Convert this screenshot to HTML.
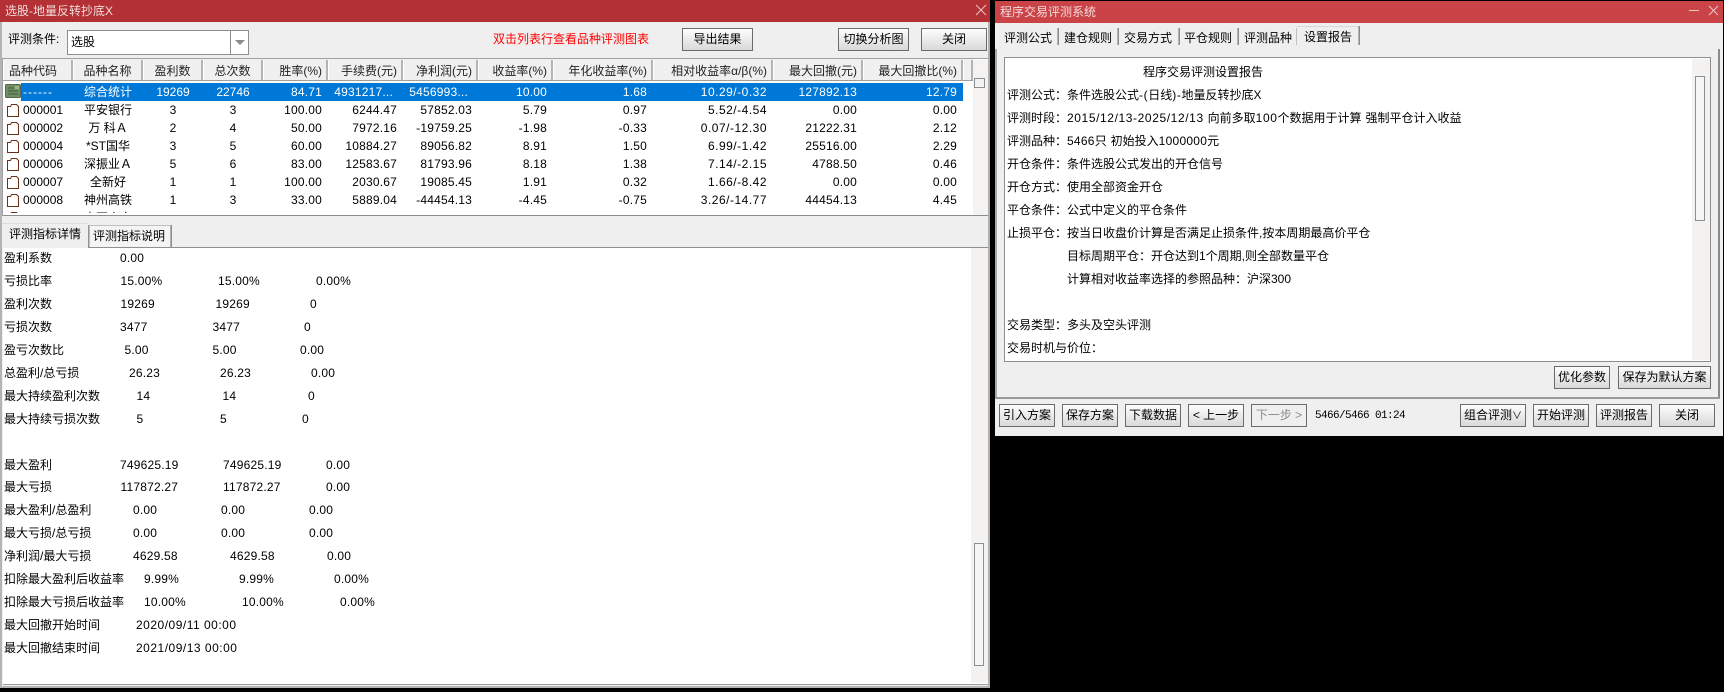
<!DOCTYPE html>
<html lang="zh-CN"><head><meta charset="utf-8"><title>选股-地量反转抄底X</title>
<style>
html,body{margin:0;padding:0;background:#000;width:1724px;height:692px;overflow:hidden}
body{position:relative;font:12px/18px "Liberation Sans","Noto Sans CJK SC",sans-serif;color:#000}
div,span,svg,table{position:absolute}
i{font-style:normal;letter-spacing:.6px}
i.w{letter-spacing:.25px}
.win{background:#efefef}
.tt{color:#f4dcdc;font-size:12px;line-height:22px;white-space:nowrap}
.btn{box-sizing:border-box;border:1px solid #6b6b6b;background:linear-gradient(#fdfdfd,#e9e9e9 55%,#d9d9d9);text-align:center;white-space:nowrap;overflow:hidden}
.hd{top:60px;height:20px;box-sizing:border-box;background:#f0f0f0;border-right:2px solid #b4b4b4;border-left:1px solid #fff;line-height:22px;white-space:nowrap;color:#222}
.c{text-align:center}.r{text-align:right;padding-right:4px}
table{border-collapse:collapse;table-layout:fixed;left:3px;top:0;width:960px}
td{height:18px;padding:0 6px 0 0;text-align:right;white-space:nowrap;overflow:hidden;line-height:18px;letter-spacing:.2px}
td.a{text-align:left;padding:0 0 0 20px;letter-spacing:0}td.m{text-align:center;padding:0;letter-spacing:0}
td.x{letter-spacing:.5px}
tr.s td.a{letter-spacing:1px}
tr.s td.e{padding-right:10px}
tr.s td{color:#fff}
.l span,.p span{white-space:pre;top:0}
.l span+span{letter-spacing:.2px}
.l span.d{letter-spacing:.5px}
.l,.p{left:0;height:18px;white-space:nowrap}
.sep{top:28px;width:2px;height:17px;background:linear-gradient(90deg,#c8c8c8,#777)}
</style></head><body>

<!-- LEFT WINDOW -->
<div class="win" style="left:0;top:0;width:990px;height:688px"></div>
<div style="left:0;top:0;width:990px;height:22px;background:#b33035"></div>
<div class="tt" style="left:5px;top:0">选股-地量反转抄底X</div>
<svg style="left:975px;top:4px" width="12" height="12"><path d="M1 1L11 11M11 1L1 11" stroke="#e8c4c4" fill="none"/></svg>
<div style="left:0;top:22px;width:2px;height:666px;background:#b4b4b4"></div>
<div style="left:988px;top:22px;width:2px;height:666px;background:#b0b0b0"></div>
<div style="left:0;top:686px;width:990px;height:2px;background:#b4b4b4"></div>

<div style="left:8px;top:30px;white-space:nowrap">评测条件:</div>
<div style="left:67px;top:30px;width:182px;height:25px;box-sizing:border-box;border:1px solid #8e8e8e;background:#fff"></div>
<div style="left:71px;top:33px;font-size:12px">选股</div>
<div style="left:230px;top:31px;width:1px;height:23px;background:#8e8e8e"></div>
<svg style="left:234px;top:39px" width="12" height="8"><path d="M1 1H11L6 6Z" fill="#8a8a8a"/></svg>
<div style="left:493px;top:30px;color:#f00;white-space:nowrap">双击列表行查看品种评测图表</div>
<div class="btn" style="left:682px;top:28px;width:71px;height:23px;line-height:21px">导出结果</div>
<div class="btn" style="left:838px;top:28px;width:71px;height:23px;line-height:21px">切换分析图</div>
<div class="btn" style="left:921px;top:28px;width:66px;height:23px;line-height:21px">关闭</div>

<!-- list -->
<div style="left:2px;top:58px;width:986px;height:158px;background:#fff"></div>
<div style="left:2px;top:58px;width:986px;height:1px;background:#a0a0a0"></div>
<div style="left:2px;top:215px;width:986px;height:1px;background:#8c8c8c"></div>
<div style="left:2px;top:58px;width:1px;height:158px;background:#a0a0a0"></div>
<div style="left:3px;top:59px;width:970px;height:22px;background:#f0f0f0"></div>
<div style="left:3px;top:80px;width:970px;height:1px;background:#a0a0a0"></div>
<div class="hd" style="left:3px;width:70px;padding-left:5px">品种代码</div>
<div class="hd c" style="left:73px;width:70px">品种名称</div>
<div class="hd c" style="left:143px;width:60px">盈利数</div>
<div class="hd c" style="left:203px;width:60px">总次数</div>
<div class="hd r" style="left:263px;width:65px">胜率(%)</div>
<div class="hd r" style="left:328px;width:75px">手续费(元)</div>
<div class="hd r" style="left:403px;width:75px">净利润(元)</div>
<div class="hd r" style="left:478px;width:75px">收益率(%)</div>
<div class="hd r" style="left:553px;width:100px">年化收益率(%)</div>
<div class="hd r" style="left:653px;width:120px">相对收益率α/β(%)</div>
<div class="hd r" style="left:773px;width:90px">最大回撤(元)</div>
<div class="hd r" style="left:863px;width:100px">最大回撤比(%)</div>
<div class="hd" style="left:963px;width:10px"></div>
<div style="left:973px;top:60px;width:15px;height:155px;background:#f4f3f2"></div>
<div style="left:974px;top:78px;width:9px;height:8px;border:1px solid #8f8f8f"></div>

<div style="left:21px;top:83px;width:942px;height:18px;background:#0078d7"></div>
<div style="left:0;top:83px;width:963px;height:130px;overflow:hidden">
<table><colgroup><col style="width:70px"><col style="width:70px"><col style="width:60px"><col style="width:60px"><col style="width:65px"><col style="width:75px"><col style="width:75px"><col style="width:75px"><col style="width:100px"><col style="width:120px"><col style="width:90px"><col style="width:100px"></colgroup>
<tr class="s"><td class="a">------</td><td class="m">综合统计</td><td class="m">19269</td><td class="m">22746</td><td>84.71</td><td class="e">4931217...</td><td class="e">5456993...</td><td>10.00</td><td>1.68</td><td class="x">10.29/-0.32</td><td>127892.13</td><td>12.79</td></tr>
<tr><td class="a">000001</td><td class="m">平安银行</td><td class="m">3</td><td class="m">3</td><td>100.00</td><td>6244.47</td><td>57852.03</td><td>5.79</td><td>0.97</td><td class="x">5.52/-4.54</td><td>0.00</td><td>0.00</td></tr>
<tr><td class="a">000002</td><td class="m">万 科Ａ</td><td class="m">2</td><td class="m">4</td><td>50.00</td><td>7972.16</td><td>-19759.25</td><td>-1.98</td><td>-0.33</td><td class="x">0.07/-12.30</td><td>21222.31</td><td>2.12</td></tr>
<tr><td class="a">000004</td><td class="m">*ST国华</td><td class="m">3</td><td class="m">5</td><td>60.00</td><td>10884.27</td><td>89056.82</td><td>8.91</td><td>1.50</td><td class="x">6.99/-1.42</td><td>25516.00</td><td>2.29</td></tr>
<tr><td class="a">000006</td><td class="m">深振业Ａ</td><td class="m">5</td><td class="m">6</td><td>83.00</td><td>12583.67</td><td>81793.96</td><td>8.18</td><td>1.38</td><td class="x">7.14/-2.15</td><td>4788.50</td><td>0.46</td></tr>
<tr><td class="a">000007</td><td class="m">全新好</td><td class="m">1</td><td class="m">1</td><td>100.00</td><td>2030.67</td><td>19085.45</td><td>1.91</td><td>0.32</td><td class="x">1.66/-8.42</td><td>0.00</td><td>0.00</td></tr>
<tr><td class="a">000008</td><td class="m">神州高铁</td><td class="m">1</td><td class="m">3</td><td>33.00</td><td>5889.04</td><td>-44454.13</td><td>-4.45</td><td>-0.75</td><td class="x">3.26/-14.77</td><td>44454.13</td><td>4.45</td></tr>
<tr><td class="a">000009</td><td class="m">中国宝安</td><td class="m">6</td><td class="m">7</td><td>86.00</td><td>18874.00</td><td>175100.00</td><td>17.51</td><td>2.96</td><td class="x">16.76/7.00</td><td>5745.78</td><td>0.46</td></tr>
</table></div>
<svg style="left:5px;top:84px" width="17" height="15"><rect x="0.5" y="0.5" width="15" height="13" rx="1" fill="#6f8f63" stroke="#55654f"/><path d="M3 4H9M3 7H13M3 10H13" stroke="#3f5a3c"/><rect x="10" y="2" width="4" height="3" fill="#9db58f"/></svg>
<svg style="left:6px;top:103px" width="14" height="110"><g fill="#fff" stroke="#6b3018"><path d="M1.5 3.5H4.5L5.5 1.5H10.5L12.5 3.5V13.5H1.5Z"/><path d="M1.5 21.5H4.5L5.5 19.5H10.5L12.5 21.5V31.5H1.5Z"/><path d="M1.5 39.5H4.5L5.5 37.5H10.5L12.5 39.5V49.5H1.5Z"/><path d="M1.5 57.5H4.5L5.5 55.5H10.5L12.5 57.5V67.5H1.5Z"/><path d="M1.5 75.5H4.5L5.5 73.5H10.5L12.5 75.5V85.5H1.5Z"/><path d="M1.5 93.5H4.5L5.5 91.5H10.5L12.5 93.5V103.5H1.5Z"/><path d="M1.5 111.5H4.5L5.5 109.5H10.5L12.5 111.5V121.5H1.5Z"/></g></svg>

<!-- lower pane -->
<div style="left:3px;top:247px;width:985px;height:437px;background:#fff"></div>
<div style="left:3px;top:247px;width:985px;height:1px;background:#8f8f8f"></div>
<div style="left:3px;top:684px;width:985px;height:1px;background:#9a9a9a"></div>
<div style="left:2px;top:223px;width:86px;height:25px;background:#efefef;border-top:1px solid #dcdcdc;box-sizing:border-box"></div>
<div style="left:88px;top:225px;width:2px;height:22px;background:linear-gradient(90deg,#808080,#d0d0d0)"></div>
<div style="left:90px;top:225px;width:80px;height:22px;background:#f4f4f4;border-top:1px solid #c0c0c0;box-sizing:border-box"></div>
<div style="left:170px;top:225px;width:2px;height:22px;background:linear-gradient(90deg,#c8c8c8,#777)"></div>
<div style="left:9px;top:225px;white-space:nowrap">评测指标详情</div>
<div style="left:93px;top:227px;white-space:nowrap">评测指标说明</div>

<div style="left:971px;top:248px;width:17px;height:435px;background:#f3f2f1"></div>
<div style="left:974px;top:543px;width:8px;height:121px;border:1px solid #8f8f8f;background:#f6f6f6"></div>

<div class="l" style="top:249px"><span style="left:4px">盈利系数</span><span style="left:120px">0.00</span></div>
<div class="l" style="top:272px"><span style="left:4px">亏损比率</span><span style="left:120.5px">15.00%</span><span style="left:218px">15.00%</span><span style="left:316px">0.00%</span></div>
<div class="l" style="top:295px"><span style="left:4px">盈利次数</span><span style="left:120.5px">19269</span><span style="left:215.5px">19269</span><span style="left:310px">0</span></div>
<div class="l" style="top:318px"><span style="left:4px">亏损次数</span><span style="left:120px">3477</span><span style="left:212.5px">3477</span><span style="left:304px">0</span></div>
<div class="l" style="top:341px"><span style="left:4px">盈亏次数比</span><span style="left:124.5px">5.00</span><span style="left:212.5px">5.00</span><span style="left:300px">0.00</span></div>
<div class="l" style="top:364px"><span style="left:4px">总盈利/总亏损</span><span style="left:129px">26.23</span><span style="left:220px">26.23</span><span style="left:311px">0.00</span></div>
<div class="l" style="top:387px"><span style="left:4px">最大持续盈利次数</span><span style="left:136.5px">14</span><span style="left:222.5px">14</span><span style="left:308px">0</span></div>
<div class="l" style="top:410px"><span style="left:4px">最大持续亏损次数</span><span style="left:136.5px">5</span><span style="left:220px">5</span><span style="left:302px">0</span></div>
<div class="l" style="top:456px"><span style="left:4px">最大盈利</span><span style="left:120px">749625.19</span><span style="left:223px">749625.19</span><span style="left:326px">0.00</span></div>
<div class="l" style="top:478px"><span style="left:4px">最大亏损</span><span style="left:120.5px">117872.27</span><span style="left:223px">117872.27</span><span style="left:326px">0.00</span></div>
<div class="l" style="top:501px"><span style="left:4px">最大盈利/总盈利</span><span style="left:133px">0.00</span><span style="left:221px">0.00</span><span style="left:309px">0.00</span></div>
<div class="l" style="top:524px"><span style="left:4px">最大亏损/总亏损</span><span style="left:133px">0.00</span><span style="left:221px">0.00</span><span style="left:309px">0.00</span></div>
<div class="l" style="top:547px"><span style="left:4px">净利润/最大亏损</span><span style="left:133px">4629.58</span><span style="left:230px">4629.58</span><span style="left:327px">0.00</span></div>
<div class="l" style="top:570px"><span style="left:4px">扣除最大盈利后收益率</span><span style="left:144px">9.99%</span><span style="left:239px">9.99%</span><span style="left:334px">0.00%</span></div>
<div class="l" style="top:593px"><span style="left:4px">扣除最大亏损后收益率</span><span style="left:144px">10.00%</span><span style="left:242px">10.00%</span><span style="left:340px">0.00%</span></div>
<div class="l" style="top:616px"><span style="left:4px">最大回撤开始时间</span><span class="d" style="left:136px">2020/09/11 00:00</span></div>
<div class="l" style="top:639px"><span style="left:4px">最大回撤结束时间</span><span class="d" style="left:136px">2021/09/13 00:00</span></div>

<!-- RIGHT WINDOW -->
<div class="win" style="left:995px;top:1px;width:728px;height:435px"></div>
<div style="left:995px;top:1px;width:728px;height:22px;background:#c94347"></div>
<div class="tt" style="left:1000px;top:1px">程序交易评测系统</div>
<svg style="left:1688px;top:5px" width="34" height="14"><path d="M1 5.5H11" stroke="#eec8c8" fill="none"/><path d="M21 1L30 10M30 1L21 10" stroke="#eec8c8" fill="none"/></svg>

<div style="left:995px;top:49px;width:2px;height:350px;background:#a8a8a8"></div>
<div style="left:1718px;top:49px;width:2px;height:350px;background:#8a8a8a"></div>
<div style="left:995px;top:397px;width:725px;height:2px;background:#9a9a9a"></div>

<div style="left:1297px;top:26px;width:62px;height:24px;background:#efefef;border-top:1px solid #d8d8d8;box-sizing:border-box"></div>
<div style="left:1004px;top:29px;white-space:nowrap">评测公式</div>
<div style="left:1064px;top:29px;white-space:nowrap">建仓规则</div>
<div style="left:1124px;top:29px;white-space:nowrap">交易方式</div>
<div style="left:1184px;top:29px;white-space:nowrap">平仓规则</div>
<div style="left:1244px;top:29px;white-space:nowrap">评测品种</div>
<div style="left:1304px;top:28px;white-space:nowrap">设置报告</div>
<div class="sep" style="left:1057px"></div>
<div class="sep" style="left:1117px"></div>
<div class="sep" style="left:1178px"></div>
<div class="sep" style="left:1237px"></div>
<div style="left:1296px;top:28px;width:1px;height:17px;background:#c0c0c0"></div>
<div style="left:1358px;top:26px;width:2px;height:19px;background:linear-gradient(90deg,#c8c8c8,#777)"></div>

<div style="left:1004px;top:57px;width:707px;height:305px;box-sizing:border-box;border:1px solid #8e8e8e;background:#fff"></div>
<div style="left:1692px;top:59px;width:18px;height:301px;background:#f3f2f1"></div>
<div style="left:1695px;top:76px;width:8px;height:143px;border:1px solid #8f8f8f;background:#f6f6f6"></div>

<div class="p" style="top:63px"><span style="left:1143px">程序交易评测设置报告</span></div>
<div class="p" style="top:86px"><span style="left:1007px">评测公式：</span><span style="left:1067px">条件选股公式<i>-(</i>日线<i>)-</i>地量反转抄底X</span></div>
<div class="p" style="top:109px"><span style="left:1007px">评测时段：</span><span style="left:1067px"><i>2015/12/13-2025/12/13 </i>向前多取<i>100</i>个数据用于计算<i> </i>强制平仓计入收益</span></div>
<div class="p" style="top:132px"><span style="left:1007px">评测品种：</span><span style="left:1067px"><i class="w">5466</i>只<i> </i>初始投入<i class="w">1000000</i>元</span></div>
<div class="p" style="top:155px"><span style="left:1007px">开仓条件：</span><span style="left:1067px">条件选股公式发出的开仓信号</span></div>
<div class="p" style="top:178px"><span style="left:1007px">开仓方式：</span><span style="left:1067px">使用全部资金开仓</span></div>
<div class="p" style="top:201px"><span style="left:1007px">平仓条件：</span><span style="left:1067px">公式中定义的平仓条件</span></div>
<div class="p" style="top:224px"><span style="left:1007px">止损平仓：</span><span style="left:1067px">按当日收盘价计算是否满足止损条件,按本周期最高价平仓</span></div>
<div class="p" style="top:247px"><span style="left:1067px">目标周期平仓：开仓达到1个周期,则全部数量平仓</span></div>
<div class="p" style="top:270px"><span style="left:1067px">计算相对收益率选择的参照品种：沪深300</span></div>
<div class="p" style="top:316px"><span style="left:1007px">交易类型：</span><span style="left:1067px">多头及空头评测</span></div>
<div class="p" style="top:339px"><span style="left:1007px">交易时机与价位：</span></div>

<div class="btn" style="left:1554px;top:366px;width:56px;height:23px;line-height:21px">优化参数</div>
<div class="btn" style="left:1618px;top:366px;width:93px;height:23px;line-height:21px">保存为默认方案</div>

<div class="btn" style="left:999px;top:404px;width:56px;height:23px;line-height:21px">引入方案</div>
<div class="btn" style="left:1062px;top:404px;width:56px;height:23px;line-height:21px">保存方案</div>
<div class="btn" style="left:1125px;top:404px;width:56px;height:23px;line-height:21px">下载数据</div>
<div class="btn" style="left:1188px;top:404px;width:56px;height:23px;line-height:21px">&lt; 上一步</div>
<div class="btn" style="left:1251px;top:404px;width:56px;height:23px;line-height:21px;color:#8d8d8d;background:#efefef">下一步 &gt;</div>
<div style="left:1315px;top:407px;font:11px/18px 'Liberation Mono',monospace;letter-spacing:-.6px;white-space:pre">5466/5466 01:24</div>
<div class="btn" style="left:1460px;top:404px;width:66px;height:23px;line-height:21px">组合评测<i style="font-size:10px;letter-spacing:0">∨</i></div>
<div class="btn" style="left:1533px;top:404px;width:56px;height:23px;line-height:21px">开始评测</div>
<div class="btn" style="left:1596px;top:404px;width:56px;height:23px;line-height:21px">评测报告</div>
<div class="btn" style="left:1659px;top:404px;width:56px;height:23px;line-height:21px">关闭</div>
</body></html>
